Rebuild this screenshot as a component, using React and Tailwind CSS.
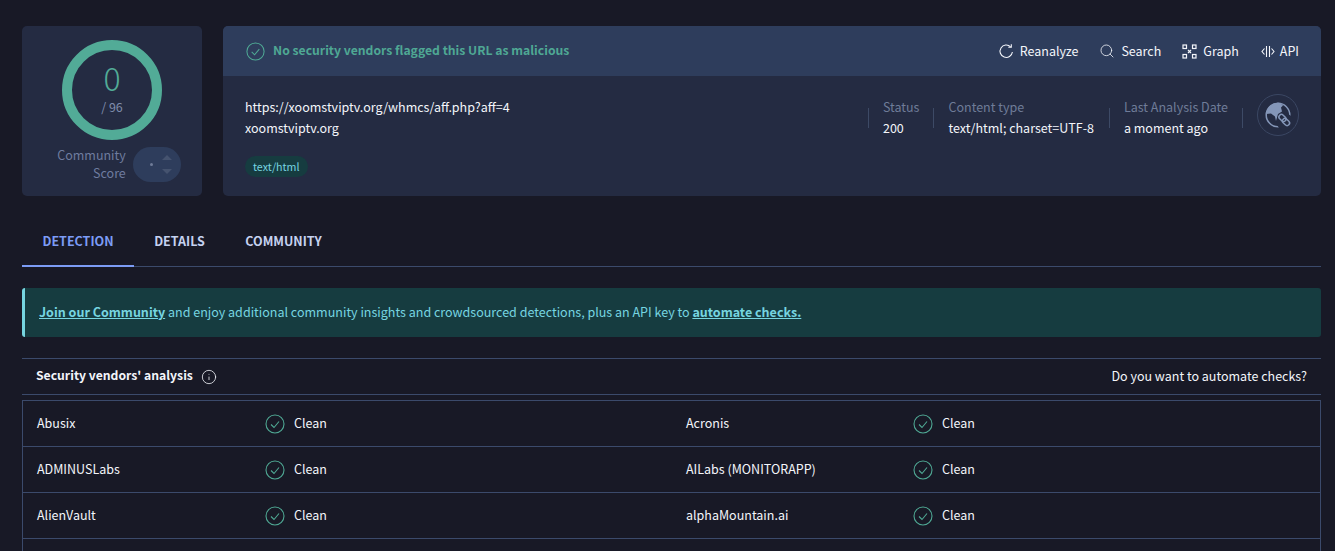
import React from "react";
import { Search, Info } from "lucide-react";

const vendors = [
  ["Abusix", "Acronis"],
  ["ADMINUSLabs", "AILabs (MONITORAPP)"],
  ["AlienVault", "alphaMountain.ai"],
  ["", ""],
];

const CheckIcon = ({ size }) => (
  <svg width={size} height={size} viewBox="0 0 22 22" fill="none" stroke="currentColor" strokeWidth="1.1" className="text-[#4fa894]">
    <circle cx="11" cy="11" r="9" />
    <path d="M7 11.5l3 3 5-6" />
  </svg>
);

const CleanCell = ({ name, width, nameWidth }) => (
  <div className={`flex items-center ${width}`}>
    <div className={`${nameWidth} pb-[2px] pl-[14px]`}>{name}</div>
    {name && (
      <div className="flex items-center gap-[8px]">
        <CheckIcon size={22} />
        <span className="pb-[2px]">Clean</span>
      </div>
    )}
  </div>
);

const ReanalyzeIcon = () => (
  <svg width="16" height="16" viewBox="0 0 16 16" fill="none" stroke="currentColor" strokeWidth="1.1">
    <path d="M12.6 3.8A6.2 6.2 0 1 0 14.4 9" />
    <path d="M13.3 1.3v3h-3" />
  </svg>
);

const GraphIcon = () => (
  <svg width="15" height="15" viewBox="0 0 15 15" fill="none" stroke="currentColor" strokeWidth="1.2">
    <rect x="1" y="1" width="3.5" height="3.5" />
    <rect x="10.5" y="1" width="3.5" height="3.5" />
    <rect x="1" y="10.5" width="3.5" height="3.5" />
    <rect x="10.5" y="10.5" width="3.5" height="3.5" />
    <path d="M6 6l3 3M9 6l-3 3" />
  </svg>
);

const ApiIcon = () => (
  <svg width="14" height="13" viewBox="0 0 14 13" fill="none" stroke="currentColor" strokeWidth="1.1">
    <path d="M3.5 3.5L1 6.5l2.5 3M10.5 3.5L13 6.5l-2.5 3" />
    <path d="M5.5 1v11M8.5 1v11" />
  </svg>
);

const GlobeLink = () => (
  <div className="-mt-[6px] flex h-[42px] w-[42px] items-center justify-center rounded-full border border-[#3b4763]">
    <svg width="30" height="30" viewBox="0 0 30 30" fill="none">
      <circle cx="15" cy="15" r="11.8" stroke="#8496b8" strokeWidth="1.5" />
      <path d="M17 3A12 12 0 0 0 3 14l5-.5 4 3 1 4.5 2-7 4-2.5-1-4 2-2z" fill="#8496b8" />
      <circle cx="22" cy="22" r="8.5" fill="#242b42" />
      <g stroke="#8496b8" strokeWidth="1.5">
        <rect x="15.5" y="15.5" width="8" height="5" rx="2.5" transform="rotate(45 19.5 18)" />
        <rect x="19" y="19.5" width="8" height="5" rx="2.5" transform="rotate(45 23 22)" />
      </g>
    </svg>
  </div>
);

const Meta = ({ label, value }) => (
  <div className="flex items-center gap-[14px]">
    <div className="h-[20px] w-px bg-[#3d4a66]" />
    <div className="flex flex-col pb-[2px]">
      <div className="text-[#6f7c98]">{label}</div>
      <div className="text-[#f3f5fa]">{value}</div>
    </div>
  </div>
);

const App = () => {
  return (
    <div
      className="h-[551px] overflow-hidden bg-[#181926] pt-[26px] pl-[22px] pr-[14px] text-[12.5px] leading-[21px] text-[#f3f5fa]"
      style={{ fontFamily: '"Noto Sans CJK SC", "Noto Sans", sans-serif' }}
    >
      <div className="flex gap-[21px]">
        {/* score */}
        <div className="flex h-[170px] w-[180px] flex-col items-center rounded-[5px] bg-[#242b42] pt-[14px]">
          <div className="flex h-[100px] w-[100px] flex-col items-center rounded-full border-[10px] border-[#52ab97]">
            <div className="mt-[9px] text-[32px] leading-[36px] font-light text-[#52ab97]">0</div>
            <div className="mt-[4px] text-[12.5px] leading-[16px] text-[#7f8cab]">/ 96</div>
          </div>
          <div className="mt-[6px] flex items-center gap-[7px] pl-[14px]">
            <div className="text-right leading-[18px] text-[#6f7c9f]">
              Community
              <br />
              Score
            </div>
            <div className="flex h-[35px] w-[48px] items-center justify-end gap-[9px] rounded-full bg-[#2e3d5c] pr-[9px]">
              <div className="h-[3px] w-[3px] rounded-full bg-[#6f7c98]" />
              <div className="flex flex-col gap-[9px]">
                <div className="h-0 w-0 border-x-[5px] border-b-[5px] border-x-transparent border-b-[#45536f]" />
                <div className="h-0 w-0 border-x-[5px] border-t-[5px] border-x-transparent border-t-[#45536f]" />
              </div>
            </div>
          </div>
        </div>

        {/* summary */}
        <div className="h-[170px] flex-1 overflow-hidden rounded-[5px] bg-[#242b42]">
          <div className="flex h-[50px] items-center justify-between bg-[#2e3d5c] pr-[22px] pl-[22px]">
            <div className="flex items-center gap-[7px] text-[12.2px] font-semibold text-[#4fa894]">
              <CheckIcon size={21} />
              <span className="pb-[2px]">No security vendors flagged this URL as malicious</span>
            </div>
            <div className="flex items-center gap-[21px]">
              <div className="flex items-center gap-[6px]">
                <ReanalyzeIcon />
                <span className="pb-[2px]">Reanalyze</span>
              </div>
              <div className="flex items-center gap-[6px]">
                <Search size={16} strokeWidth={1.2} />
                <span className="pb-[2px]">Search</span>
              </div>
              <div className="flex items-center gap-[6px]">
                <GraphIcon />
                <span className="pb-[2px]">Graph</span>
              </div>
              <div className="ml-[1px] flex items-center gap-[5px]">
                <ApiIcon />
                <span className="pb-[2px]">API</span>
              </div>
            </div>
          </div>
          <div className="flex justify-between pt-[20px] pr-[22px] pl-[22px]">
            <div>
              <div className="leading-[21px]">https://xoomstviptv.org/whmcs/aff.php?aff=4</div>
              <div className="leading-[21px]">xoomstviptv.org</div>
              <span className="mt-[18px] inline-block rounded-full bg-[#163c40] px-[8px] text-[10.7px] leading-[21px] text-[#76d5e0]">
                text/html
              </span>
            </div>
            <div className="flex h-[44px] items-center gap-[14px]">
              <Meta label="Status" value="200" />
              <div className="mr-[1px]">
                <Meta label="Content type" value="text/html; charset=UTF-8" />
              </div>
              <Meta label="Last Analysis Date" value="a moment ago" />
              <div className="h-[20px] w-px bg-[#3d4a66]" />
              <GlobeLink />
            </div>
          </div>
        </div>
      </div>

      {/* tabs */}
      <div className="mt-[21px] flex h-[50px] border-b border-[#3b4a6b] font-semibold">
        <div className="flex h-[50px] w-[112px] items-center justify-center border-b-2 border-[#7c9cf5] pb-[2px] text-[#7c9cf5]">
          DETECTION
        </div>
        <div className="flex h-[49px] w-[91px] items-center justify-center pb-[2px] text-[#c5d2f0]">DETAILS</div>
        <div className="flex h-[49px] w-[117px] items-center justify-center pb-[2px] text-[#c5d2f0]">COMMUNITY</div>
      </div>

      {/* banner */}
      <div className="mt-[21px] flex h-[49px] items-center rounded-[3px] border-l-[3px] border-[#76d5e0] bg-[#163c40] pb-[2px] pl-[14px] text-[12.53px] text-[#76d5e0]">
        <span>
          <a className="font-bold underline">Join our Community</a> and enjoy additional community insights and
          crowdsourced detections, plus an API key to <a className="font-bold underline">automate checks.</a>
        </span>
      </div>

      {/* vendors */}
      <div className="mt-[21px] flex h-[37px] items-center justify-between border-y border-[#3b4a6b] pr-[14px] pl-[14px]">
        <div className="flex items-center gap-[8px] text-[12.2px] font-semibold">
          <span className="pb-[2px]">Security vendors' analysis</span>
          <Info size={16} strokeWidth={1.2} />
        </div>
        <div className="pb-[2px]">Do you want to automate checks?</div>
      </div>
      <div className="mt-[5px] border-x border-t border-[#3b4a6b]">
        {vendors.map((row, i) => (
          <div key={i} className="flex h-[46px] border-b border-[#3b4a6b]">
            <CleanCell name={row[0]} width="w-[649px]" nameWidth="w-[241px]" />
            <CleanCell name={row[1]} width="flex-1" nameWidth="w-[240px]" />
          </div>
        ))}
      </div>
    </div>
  );
};

export default App;
